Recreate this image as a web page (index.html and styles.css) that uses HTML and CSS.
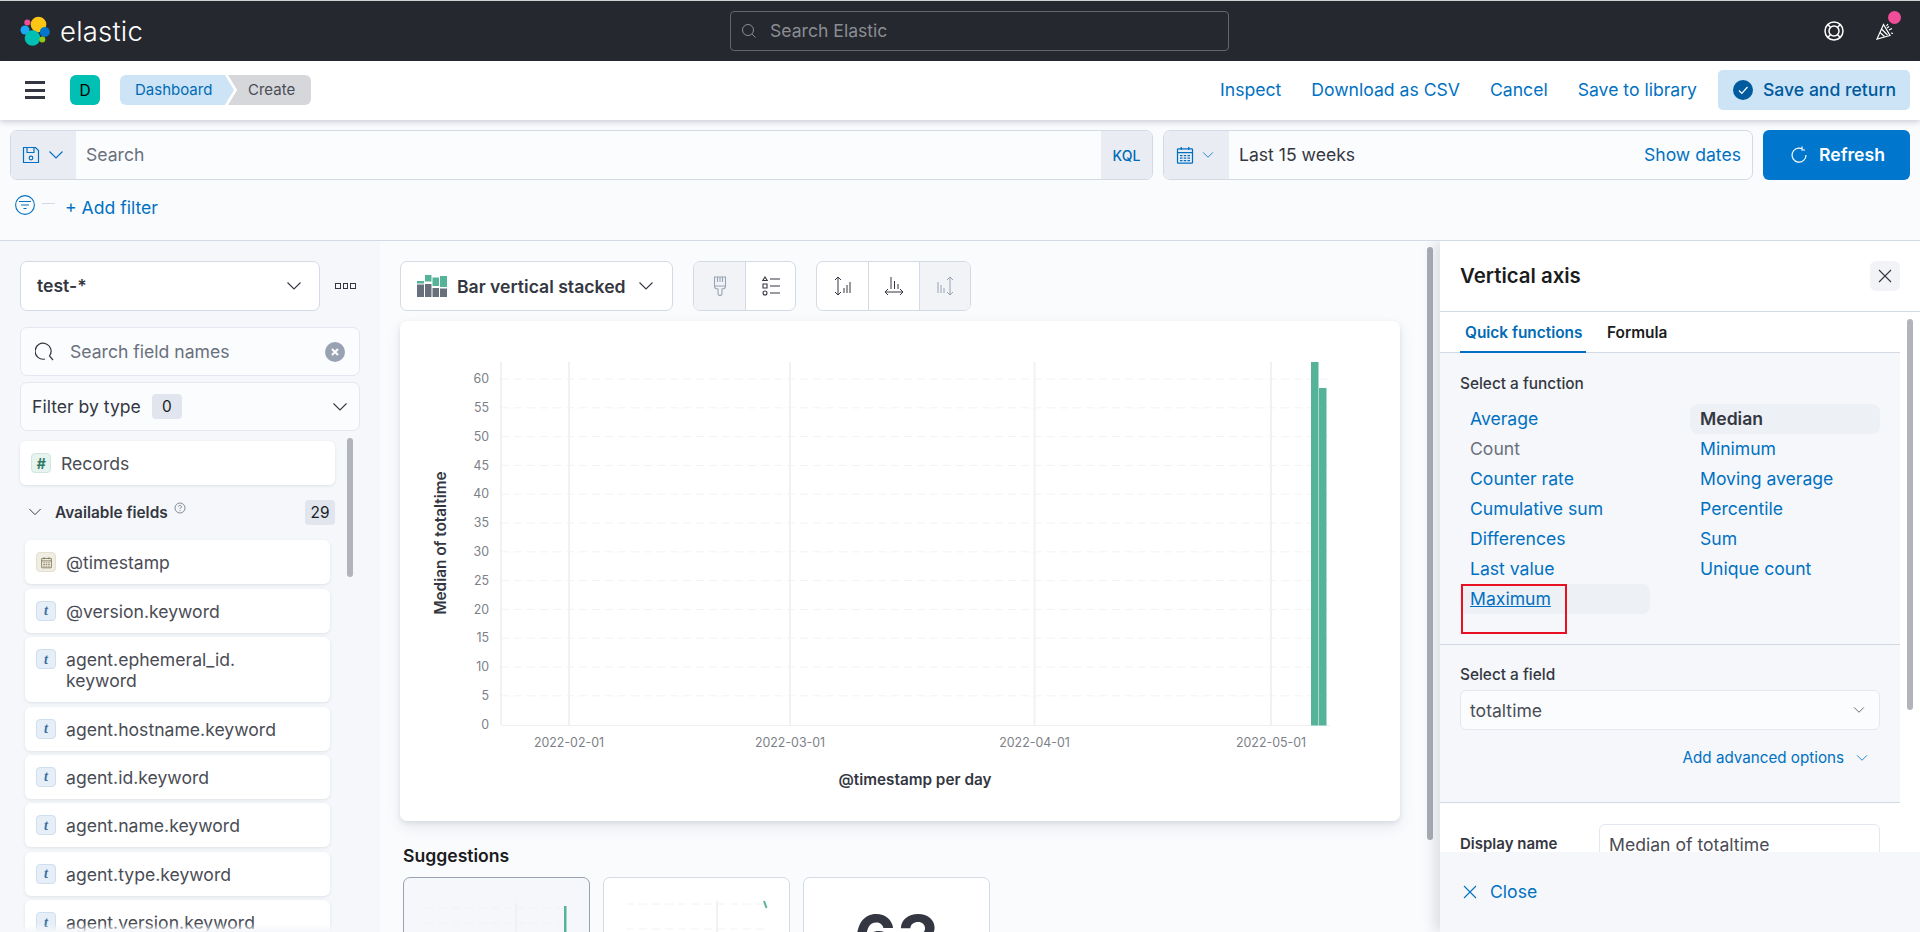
FILE: index.html
```html
<!DOCTYPE html>
<html lang="en">
<head>
<meta charset="utf-8">
<title>Elastic</title>
<link rel="stylesheet" href="styles.css">
</head>
<body>
<svg class="sprite" aria-hidden="true">
  <symbol id="chev" viewBox="0 0 16 16"><path d="M1.5 4.5 8 11l6.5-6.5" fill="none" stroke="currentColor" stroke-width="1.1"/></symbol>
  <symbol id="cross" viewBox="0 0 16 16"><path d="M2 2l12 12M14 2 2 14" fill="none" stroke="currentColor" stroke-width="1.1"/></symbol>
  <symbol id="cal" viewBox="0 0 16 16"><path d="M2.5 3h11a.5.5 0 0 1 .5.5v10.5a.5.5 0 0 1-.5.5h-11a.5.5 0 0 1-.5-.5V3.500a.5.5 0 0 1 .5-.5zM2 6h12M5 1.500V4M11 1.500V4" fill="none" stroke="currentColor"/><path d="M4 8h2v1H4zM7 8h2v1H7zM10 8h2v1h-2zM4 10h2v1H4zM7 10h2v1H7zM10 10h2v1h-2zM4 12h2v1H4zM7 12h2v1H7zM10 12h2v1h-2z" fill="currentColor"/></symbol>
</svg>
<div class="page">
  <header class="topbar">
    <div class="brand">
      <svg class="logo" viewBox="0 0 30 30">
        <circle cx="18.500" cy="8.500" r="7.800" fill="#fec514"/>
        <circle cx="7.300" cy="6.500" r="3" fill="#f04e98"/>
        <circle cx="5" cy="14" r="4.500" fill="#1ba9f5"/>
        <circle cx="12.500" cy="22" r="7.800" fill="#00bfb3"/>
        <circle cx="24.800" cy="16" r="5" fill="#0077cc"/>
        <circle cx="22.300" cy="23.500" r="3" fill="#93c90e"/>
      </svg>
      <span class="wordmark">elastic</span>
    </div>
    <div class="globalsearch">
      <svg class="ico16" viewBox="0 0 16 16"><circle cx="7" cy="7" r="5.500" fill="none" stroke="currentColor"/><path d="M11 11l3.500 3.500" stroke="currentColor"/></svg>
      <span>Search Elastic</span>
    </div>
    <div class="topicons">
      <svg class="ico20" viewBox="0 0 20 20" fill="none" stroke="#fff" stroke-width="1.500"><circle cx="10" cy="10" r="9"/><circle cx="10" cy="10" r="5"/><path d="M3.800 3.500 6.600 6.500M16.200 3.500l-2.800 3M3.800 16.500l2.800-3M16.200 16.500l-2.800-3"/></svg>
      <span class="popper">
        <svg class="ico20" viewBox="0 0 20 20" fill="none" stroke="#fff" stroke-width="1.200"><path d="M8.500 3.500 2 18l13-3.500z"/><path d="M6.500 8l6 6M5 11.500l4.500 4M11.500 5 13 3M14 9l3-1.500M12 7l2-1.500M16 12l2 .5"/></svg>
        <i class="dot"></i>
      </span>
    </div>
  </header>

  <nav class="subnav">
    <span class="burger"><i></i><i></i><i></i></span>
    <span class="avatar">D</span>
    <div class="crumbs">
      <span class="crumb crumb-blue">Dashboard</span>
      <span class="crumb crumb-grey">Create</span>
    </div>
    <div class="navlinks">
      <a>Inspect</a>
      <a>Download as CSV</a>
      <a>Cancel</a>
      <a>Save to library</a>
      <button class="savebtn">
        <svg class="ico20" viewBox="0 0 20 20"><circle cx="10" cy="10" r="10" fill="#005a9e"/><path d="M6 10.500l2.800 2.800L14.500 7" fill="none" stroke="#fff" stroke-width="1.200"/></svg>
        Save and return
      </button>
    </div>
  </nav>

  <section class="querybar">
    <div class="qsearch">
      <div class="prepend prepend-save">
        <svg class="ico18" viewBox="0 0 18 18" fill="none" stroke="currentColor" stroke-width="1.200"><path d="M1.500 1.500h12l3 3v12h-15z"/><path d="M5 1.500v5h7v-5"/><circle cx="9" cy="12" r="1.800"/></svg>
        <svg class="ico16" viewBox="0 0 16 16"><use href="#chev"/></svg>
      </div>
      <span class="qtext">Search</span>
      <span class="kql">KQL</span>
    </div>
    <div class="qdate">
      <div class="prepend prepend-cal">
        <svg class="ico20" viewBox="0 0 16 16"><use href="#cal"/></svg>
        <svg class="ico12" viewBox="0 0 16 16"><use href="#chev"/></svg>
      </div>
      <span class="qrange">Last 15 weeks</span>
      <a class="showdates">Show dates</a>
    </div>
    <button class="refresh">
      <svg class="ico18" viewBox="0 0 18 18" fill="none" stroke="#fff" stroke-width="1.200"><path d="M12 2.800A7 7 0 1 0 16 9"/><path d="M12 .5v3.500h3"/></svg>
      <span class="refreshlabel">Refresh</span>
    </button>
  </section>

  <section class="filterbar">
    <svg class="ico20" viewBox="0 0 20 20" fill="none" stroke="#0071c2" stroke-width="1.100"><circle cx="10" cy="10" r="9.400"/><path d="M4 6.500h12M6 10h8M8.500 13.500h3"/></svg>
    <i class="dash"></i>
    <a class="addfilter">+ Add filter</a>
  </section>

  <main class="workspace">
    <aside class="sidebar">
      <div class="indexrow">
        <div class="indexpick">
          <span>test-*</span>
          <svg class="ico16" viewBox="0 0 16 16"><use href="#chev"/></svg>
        </div>
        <span class="dots"><i></i><i></i><i></i></span>
      </div>
      <div class="fieldsearch">
        <svg class="ico20" viewBox="0 0 20 20" fill="none" stroke="#343741" stroke-width="1.200"><path d="M18 18l-3.500-4A8 8 0 1 0 10 17"/></svg>
        <span class="ph">Search field names</span>
        <span class="clear"><svg viewBox="0 0 10 10"><path d="M2 2l6 6M8 2 2 8" stroke="#fff" stroke-width="2"/></svg></span>
      </div>
      <div class="typefilter">
        <span class="typelabel">Filter by type</span>
        <span class="badge">0</span>
        <svg class="ico16 pushright" viewBox="0 0 16 16"><use href="#chev"/></svg>
      </div>
      <div class="fieldlist">
        <div class="field field-records"><span class="ftype ftype-num">#</span><span>Records</span></div>
        <div class="availrow">
          <svg class="ico16" viewBox="0 0 16 16"><use href="#chev"/></svg>
          <strong>Available fields</strong>
          <svg class="help" viewBox="0 0 12 12"><circle cx="6" cy="6" r="5" fill="none" stroke="#69707d" stroke-width=".8"/><path d="M4.600 4.800a1.400 1.400 0 1 1 2.200 1.100c-.5.400-.8.600-.8 1.200M6 8.200v1" fill="none" stroke="#69707d" stroke-width=".8"/></svg>
          <span class="badge badge-end">29</span>
        </div>
        <div class="field"><span class="ftype ftype-date"><svg viewBox="0 0 16 16"><use href="#cal"/></svg></span><span>@timestamp</span></div>
        <div class="field"><span class="ftype ftype-text">t</span><span>@version.keyword</span></div>
        <div class="field"><span class="ftype ftype-text">t</span><span>agent.ephemeral_id.<br>keyword</span></div>
        <div class="field"><span class="ftype ftype-text">t</span><span>agent.hostname.keyword</span></div>
        <div class="field"><span class="ftype ftype-text">t</span><span>agent.id.keyword</span></div>
        <div class="field"><span class="ftype ftype-text">t</span><span>agent.name.keyword</span></div>
        <div class="field"><span class="ftype ftype-text">t</span><span>agent.type.keyword</span></div>
        <div class="field"><span class="ftype ftype-text">t</span><span>agent.version.keyword</span></div>
      </div>
      <i class="sidescroll"></i>
      <i class="sidefade"></i>
    </aside>

    <section class="center">
      <div class="toolbar">
        <div class="chartpick">
          <svg class="barsicon" viewBox="0 0 30 22">
            <path fill="#54b399" d="M0 6h7v2.500H0zM8 0h6.500v6.500H8zM15.500 2.500H22V11h-6.500zM23 1h7v11h-7z"/>
            <path fill="#69707d" d="M0 9.500h7V22H0zM8 9h6.500v13H8zM15.500 13H22v9h-6.500zM23 13.500h7V22h-7z"/>
          </svg>
          <span>Bar vertical stacked</span>
          <svg class="ico16" viewBox="0 0 16 16"><use href="#chev"/></svg>
        </div>
        <div class="btngroup">
          <span class="gbtn gbtn-on">
            <svg class="ico20" viewBox="0 0 20 20" fill="none" stroke="#98a2b3" stroke-width="1.100"><path d="M4.500 1h11v9h-11zM4.500 10c0 2 1 3 3.500 3v4.500a2 2 0 0 0 4 0V13c2.500 0 3.500-1 3.500-3M7.500 1v5M10 1v5M12.500 1v5"/></svg>
          </span>
          <span class="gbtn">
            <svg class="ico20" viewBox="0 0 20 20" fill="none" stroke="#343741" stroke-width="1.100"><path d="M9 3h10M9 10h10M9 17h10"/><path d="M4 1l2.200 3.500H1.800z"/><path d="M2 8h4v4H2z"/><circle cx="4" cy="17" r="2"/></svg>
          </span>
        </div>
        <div class="btngroup btngroup-wide">
          <span class="gbtn">
            <svg class="ico20" viewBox="0 0 20 20" fill="none" stroke="#343741" stroke-width="1"><path d="M5 1v18M2 4l3-3 3 3M2 16l3 3 3-3M11 12v5M14 9v8M17 6v11"/></svg>
          </span>
          <span class="gbtn">
            <svg class="ico20" viewBox="0 0 20 20" fill="none" stroke="#343741" stroke-width="1"><path d="M1 16h18M4 13l-3 3 3 3M16 13l3 3-3 3M7 1v12M10.500 5v8M14 8v5"/></svg>
          </span>
          <span class="gbtn gbtn-on">
            <svg class="ico20" viewBox="0 0 20 20" fill="none" stroke="#98a2b3" stroke-width="1"><path d="M15 1v18M12 4l3-3 3 3M12 16l3 3 3-3M3 6v11M6 9v8M9 12v5"/></svg>
          </span>
        </div>
      </div>

      <div class="chartcard">
        <svg class="chart" viewBox="0 0 1000 500" width="1000" height="500">
          <g class="grid-h">
            <path d="M101 58H928M101 86.800H928M101 115.600H928M101 144.400H928M101 173.200H928M101 202H928M101 230.800H928M101 259.600H928M101 288.400H928M101 317.200H928M101 346H928M101 374.800H928"/>
          </g>
          <g class="grid-v">
            <path d="M101 41V404M169 41V404M390 41V404M634.500 41V404M871 41V404"/>
          </g>
          <path class="baseline" d="M101 404.500H930"/>
          <rect class="bar" x="911" y="41" width="7.500" height="363.500"/>
          <rect class="bar" x="919" y="67" width="7.500" height="337.500"/>
          <g class="ylabels">
            <text x="89" y="62">60</text><text x="89" y="91">55</text><text x="89" y="120">50</text>
            <text x="89" y="149">45</text><text x="89" y="177">40</text><text x="89" y="206">35</text>
            <text x="89" y="235">30</text><text x="89" y="264">25</text><text x="89" y="293">20</text>
            <text x="89" y="321">15</text><text x="89" y="350">10</text><text x="89" y="379">5</text>
            <text x="89" y="408">0</text>
          </g>
          <g class="xlabels">
            <text x="169" y="426">2022-02-01</text><text x="390" y="426">2022-03-01</text>
            <text x="634.500" y="426">2022-04-01</text><text x="871" y="426">2022-05-01</text>
          </g>
          <text class="axistitle" x="515" y="464">@timestamp per day</text>
          <text class="axistitle" transform="translate(46 222) rotate(-90)">Median of totaltime</text>
        </svg>
      </div>

      <h3 class="sugtitle">Suggestions</h3>
      <div class="sugrow">
        <div class="sugcard sugcard-on">
          <svg viewBox="0 0 186 60" width="186" height="60" class="mini">
            <path class="grid-h" d="M22 30H160M22 45H160"/>
            <path class="grid-v" d="M112 25V60"/>
            <rect class="bar" x="160" y="28" width="2.500" height="32"/>
          </svg>
        </div>
        <div class="sugcard">
          <svg viewBox="0 0 186 60" width="186" height="60" class="mini">
            <path class="grid-h" d="M22 26H160M22 51H160"/>
            <path class="grid-v" d="M113 23V60"/>
            <path d="M160 23l2.500 7" stroke="#54b399" stroke-width="2" fill="none"/>
          </svg>
        </div>
        <div class="sugcard sugcard-metric"><span>63</span></div>
      </div>
      <i class="mainscroll"></i>
    </section>

    <aside class="flyout">
      <div class="flyhead">
        <h2>Vertical axis</h2>
        <span class="flyclose"><svg class="ico16" viewBox="0 0 16 16"><use href="#cross"/></svg></span>
      </div>
      <div class="flybody">
        <div class="flyinner">
          <div class="tabs">
            <span class="tab tab-on">Quick functions</span>
            <span class="tab">Formula</span>
          </div>
          <div class="sect sect-fn">
            <div class="label">Select a function</div>
            <div class="fngrid">
              <a class="fn">Average</a>
              <a class="fn fn-off">Count</a>
              <a class="fn">Counter rate</a>
              <a class="fn">Cumulative sum</a>
              <a class="fn">Differences</a>
              <a class="fn">Last value</a>
              <a class="fn fn-hover"><u>Maximum</u></a>
              <a class="fn fn-sel">Median</a>
              <a class="fn">Minimum</a>
              <a class="fn">Moving average</a>
              <a class="fn">Percentile</a>
              <a class="fn">Sum</a>
              <a class="fn">Unique count</a>
            </div>
            <i class="redbox"></i>
          </div>
          <div class="sect sect-field">
            <div class="label">Select a field</div>
            <div class="select">
              <span>totaltime</span>
              <svg class="ico12" viewBox="0 0 16 16"><use href="#chev"/></svg>
            </div>
            <a class="advanced">Add advanced options
              <svg class="ico12" viewBox="0 0 16 16"><use href="#chev"/></svg>
            </a>
          </div>
          <div class="sect-name">
            <div class="label label-strong">Display name</div>
            <div class="nameinput">Median of totaltime</div>
          </div>
        </div>
        <i class="flyscroll"></i>
      </div>
      <div class="flyfoot">
        <svg class="ico16" viewBox="0 0 16 16"><use href="#cross"/></svg>
        <a>Close</a>
      </div>
    </aside>
  </main>
</div>
</body>
</html>
```
FILE: styles.css
```css
* { box-sizing: border-box; }
html, body { margin: 0; padding: 0; }
body { font-family: Inter, "Liberation Sans", sans-serif; font-size: 17.6px; color: #343741; background: #fafbfd; }
a { color: #0071c2; }
i { display: block; font-style: normal; }
.sprite { display: none; }
.page { width: 1920px; height: 932px; display: flex; flex-direction: column; overflow: hidden; }

.ico12 { width: 12px; height: 12px; flex: none; }
.ico16 { width: 16px; height: 16px; flex: none; }
.ico18 { width: 18px; height: 18px; flex: none; }
.ico20 { width: 20px; height: 20px; flex: none; }

/* top bar */
.topbar { height: 61px; flex: none; background: #25282f; border-top: 1px solid #d0d1d3; display: grid; grid-template-columns: 730px 499px 1fr; align-items: center; }
.brand { display: flex; align-items: center; padding-left: 20px; gap: 10px; }
.logo { width: 30px; height: 30px; }
.wordmark { color: #fff; font-size: 27.500px; font-weight: 300; letter-spacing: .2px; line-height: 30px; }
.globalsearch { height: 40px; border: 1px solid #63666c; border-radius: 4px; background: #25282f; display: flex; align-items: center; gap: 13px; padding: 0 0 1px 10px; color: #8b8d93; }
.topicons { display: flex; justify-content: flex-end; align-items: center; gap: 31px; padding-right: 25px; }
.popper { position: relative; display: block; height: 20px; }
.dot { position: absolute; top: -10px; left: 13px; width: 13px; height: 13px; border-radius: 50%; background: #f04e98; }

/* app menu */
.subnav { height: 59px; flex: none; background: #fff; box-shadow: 0 2px 6px rgba(60, 70, 100, .25); display: flex; align-items: center; padding: 0 10px 1px 25px; position: relative; z-index: 2; }
.burger { width: 20px; display: flex; flex-direction: column; gap: 4.500px; }
.burger i { height: 3px; background: #343741; }
.avatar { width: 30px; height: 30px; margin-left: 25px; border-radius: 6px; background: #00bfb3; color: #000; font-size: 15.400px; display: flex; align-items: center; justify-content: center; }
.crumbs { display: flex; margin-left: 20px; font-size: 15px; }
.crumb { height: 30px; display: flex; align-items: center; padding-bottom: 1px; }
.crumb-blue { width: 114px; padding-left: 15px; background: #cce4f5; color: #006bb4; border-radius: 6px 0 0 6px; clip-path: polygon(0 0, 92% 0, 100% 50%, 92% 100%, 0 100%); }
.crumb-grey { width: 83px; margin-left: -6px; padding-left: 20px; background: #d6d7da; color: #4a4c55; border-radius: 0 6px 6px 0; clip-path: polygon(0 0, 100% 0, 100% 100%, 0 100%, 11% 50%); }
.navlinks { margin-left: auto; display: flex; align-items: center; gap: 30px; }
.navlinks a { margin-bottom: 2px; }
.savebtn { width: 192px; height: 40px; margin-left: -9px; border: 0; border-radius: 5px; background: #cce4f5; color: #005a9e; display: flex; align-items: center; gap: 10px; padding: 0 0 1px 15px; font: 500 17.600px Inter, sans-serif; }

/* query bar */
.querybar { height: 60px; flex: none; padding: 10px 10px 0; display: flex; gap: 10px; }
.qsearch, .qdate { height: 50px; border: 1px solid #d3dae6; border-radius: 7px; background: #fbfcfd; display: flex; align-items: center; overflow: hidden; }
.qsearch { width: 1143px; }
.qdate { width: 590px; }
.prepend { height: 100%; background: #e9edf3; color: #0071c2; display: flex; align-items: center; flex: none; }
.prepend-save { width: 65px; gap: 8px; padding-left: 11px; }
.prepend-cal { width: 65px; gap: 7px; padding-left: 11px; }
.qtext { margin: 0 0 2px 10px; color: #69707d; flex: 1; }
.kql { width: 51px; height: 100%; background: #e9edf3; color: #006bb4; font-size: 14px; font-weight: 500; display: flex; align-items: center; justify-content: center; }
.qrange { margin: 0 0 1px 10px; color: #343741; }
.showdates { margin: 0 0 1px auto; padding-right: 11px; }
.refresh { width: 147px; height: 50px; border: 0; border-radius: 6px; background: #0077cc; color: #fff; display: flex; align-items: center; gap: 11px; padding: 0 0 0 27px; font: 600 17.600px Inter, sans-serif; }
.refreshlabel { margin-bottom: 1px; }

/* filter row */
.filterbar { height: 61px; flex: none; display: flex; align-items: center; padding: 0 0 10px 15px; border-bottom: 1px solid #d3dae6; }
.dash { width: 13px; height: 1px; background: #d3dae6; margin: 0 11px 3px 7px; }
.addfilter { margin-top: 5px; margin-left: -1px; }

/* workspace */
.workspace { flex: 1; min-height: 0; display: flex; overflow: hidden; }

/* sidebar */
.sidebar { width: 380px; flex: none; background: #f5f7fa; padding: 20px 20px 0; position: relative; overflow: hidden; }
.indexrow { display: flex; align-items: center; gap: 15px; }
.indexpick { width: 300px; height: 50px; border: 1px solid #d3dae6; border-radius: 7px; background: #fff; display: flex; align-items: center; justify-content: space-between; padding: 0 17px 1px 16px; font-weight: 600; }
.dots { display: flex; gap: 2px; }
.dots i { width: 5.500px; height: 5.500px; border: 1px solid #343741; }
.fieldsearch, .typefilter { width: 340px; height: 49px; border: 1px solid #e3e8f0; border-radius: 7px; background: #fbfcfd; display: flex; align-items: center; }
.fieldsearch { margin-top: 16px; padding: 0 14px; }
.ph { margin-left: 15px; color: #69707d; flex: 1; }
.clear { width: 20px; height: 20px; border-radius: 50%; background: #98a2b3; display: flex; align-items: center; justify-content: center; }
.clear svg { width: 10px; height: 10px; }
.typefilter { margin-top: 6px; padding: 0 11px; }
.typelabel { margin-bottom: 1px; }
.badge { height: 25px; min-width: 30px; padding: 0 4px; margin-left: 11px; border-radius: 4px; background: #e0e5ee; color: #1a1c21; font-size: 15.400px; display: flex; align-items: center; justify-content: center; }
.pushright { margin-left: auto; }
.fieldlist { width: 315px; margin-top: 10px; }
.field { display: flex; align-items: flex-start; gap: 10px; width: 305px; margin: 0 0 4.400px 5px; padding: 12px 11px 11px; background: #fff; border-radius: 6px; box-shadow: 0 1px 3px rgba(60, 70, 100, .12); line-height: 21px; color: #4a4c55; min-height: 44px; }
.field-records { width: 315px; margin-left: 0; }
.ftype { width: 20px; height: 20px; flex: none; border-radius: 4px; display: flex; align-items: center; justify-content: center; font-size: 14px; font-weight: 700; font-style: italic; font-family: "Liberation Serif", serif; }
.ftype-num { background: #e6f3ef; border: 1px solid #cfe6de; color: #2f7a62; font-family: Inter, sans-serif; }
.ftype-text { background: #e6eff8; border: 1px solid #cfdfef; color: #3f6f9e; }
.ftype-date { background: #f0eee4; border: 1px solid #e4e0d0; color: #7a6e4a; }
.ftype-date svg { width: 13px; height: 13px; }
.availrow { height: 53px; margin-top: -2px; padding: 0 0 3px 8px; display: flex; align-items: center; color: #343741; font-size: 15.400px; }
.availrow strong { margin-left: 13px; font-weight: 600; }
.availrow .ico16 { width: 14px; height: 14px; }
.help { width: 12px; height: 12px; margin: -8px 0 0 6px; }
.badge-end { margin-left: auto; }
.sidescroll { position: absolute; left: 347px; top: 197px; width: 6px; height: 139px; border-radius: 3px; background: #b1b4bb; }
.sidefade { position: absolute; left: 0; bottom: 0; width: 100%; height: 8px; background: linear-gradient(rgba(245, 247, 250, 0), #f5f7fa); }

/* center */
.center { width: 1060px; flex: none; padding: 20px 0 0 20px; position: relative; overflow: hidden; }
.toolbar { display: flex; gap: 20px; height: 50px; }
.chartpick { width: 273px; height: 50px; border: 1px solid #d3dae6; border-radius: 7px; background: #fff; display: flex; align-items: center; padding: 0 18px 0 16px; font-weight: 600; }
.barsicon { width: 30px; height: 22px; margin-right: 10px; flex: none; }
.chartpick .ico16 { margin-left: auto; }
.btngroup { display: flex; height: 50px; border: 1px solid #d3dae6; border-radius: 7px; overflow: hidden; background: #fff; }
.gbtn { width: 50px; display: flex; align-items: center; justify-content: center; border-left: 1px solid #d3dae6; }
.gbtn:first-child { border-left: 0; width: 51px; }
.btngroup-wide .gbtn { width: 51px; }
.btngroup-wide .gbtn:first-child { width: 51px; }
.gbtn-on { background: #f1f3f6; }
.chartcard { width: 1000px; height: 500px; margin-top: 10px; background: #fff; border-radius: 7px; box-shadow: 0 2px 4px rgba(60, 70, 100, .1), 0 6px 14px rgba(60, 70, 100, .1); }
.chart { display: block; }
.grid-h, .grid-h path { stroke: #f1f2f5; stroke-width: 1; stroke-dasharray: 8 5; fill: none; }
.grid-v, .grid-v path { stroke: #eff1f5; stroke-width: 2; fill: none; }
.baseline { stroke: #eef0f4; stroke-width: 1; fill: none; }
.bar { fill: #54b399; }
.ylabels text { font: 12.400px Inter, sans-serif; fill: #7d7f87; text-anchor: end; }
.xlabels text { font: 12.400px Inter, sans-serif; fill: #7d7f87; text-anchor: middle; }
.axistitle { font: 600 15.300px Inter, sans-serif; fill: #343741; text-anchor: middle; }
.sugtitle { margin: 25px 0 0 3px; font-size: 17.600px; line-height: 20px; font-weight: 600; color: #1a1c21; }
.sugrow { display: flex; gap: 13px; margin: 11px 0 0 3px; }
.sugcard { width: 187px; height: 90px; border: 1px solid #d3dae6; border-radius: 7px 7px 0 0; background: #fff; overflow: hidden; }
.sugcard-on { background: #f5f7fa; border-color: #98a2b3; }
.mini { display: block; }
.sugcard-metric { display: flex; justify-content: center; font-size: 66px; font-weight: 700; color: #343741; line-height: 122px; }
.mainscroll { position: absolute; left: 1047px; top: 6px; width: 6px; height: 593px; border-radius: 3px; background: #a9acb5; }

/* flyout */
.flyout { width: 480px; flex: none; background: #fff; display: flex; flex-direction: column; box-shadow: -6px 0 12px rgba(60, 60, 70, .14); position: relative; z-index: 1; }
.flyhead { height: 71px; flex: none; border-bottom: 1px solid #d3dae6; display: flex; align-items: center; justify-content: space-between; padding: 0 20px; }
.flyhead h2 { margin: 0 0 2px; font-size: 20.400px; font-weight: 600; color: #1a1c21; }
.flyclose { width: 30px; height: 30px; border-radius: 6px; background: #f1f3f6; display: flex; align-items: center; justify-content: center; }
.flybody { flex: 1; min-height: 0; position: relative; overflow: hidden; }
.flyinner { width: 460px; }
.tabs { height: 41px; display: flex; gap: 10px; padding-left: 20px; border-bottom: 1px solid #d3dae6; }
.tab { height: 41px; padding: 0 5px; display: flex; align-items: center; font-size: 15.400px; font-weight: 600; color: #1a1c21; white-space: nowrap; }
.tab-on { width: 126px; color: #006bb4; border-bottom: 2px solid #0071c2; padding-top: 2px; }
.tab:nth-child(2) { margin-left: 6px; }
.sect { background: #f5f7fa; border-bottom: 1px solid #d3dae6; padding: 0 20px; position: relative; }
.label { height: 20px; line-height: 20px; font-size: 15.400px; font-weight: 500; color: #343741; }
.sect-fn { height: 292px; padding-top: 21px; }
.fngrid { margin-top: 10px; display: grid; grid-auto-flow: column; grid-template-rows: repeat(7, 30px); grid-template-columns: 190px 190px; column-gap: 40px; }
.fn { display: flex; align-items: center; padding: 0 0 2px 10px; border-radius: 8px; }
.fn-off { color: #69707d; }
.fn-sel { background: #edf0f4; color: #343741; font-weight: 600; }
.fn-hover { background: #edf0f4; }
.redbox { position: absolute; left: 21px; top: 231px; width: 106px; height: 50px; border: 2px solid #e81123; }
.sect-field { height: 158px; padding-top: 20px; }
.select { height: 40px; margin-top: 5px; border: 1px solid #e3e8f0; border-radius: 6px; background: #fbfcfd; display: flex; align-items: center; justify-content: space-between; padding: 0 14px 0 9px; color: #4a4c55; }
.advanced { display: flex; justify-content: flex-end; align-items: center; gap: 12px; margin-top: 18px; padding-right: 12px; font-size: 15.200px; line-height: 20px; }
.sect-name { display: flex; padding: 21px 20px 0; }
.label-strong { width: 139px; font-weight: 600; margin-top: 10px; font-size: 15px; white-space: nowrap; }
.nameinput { width: 281px; height: 40px; border: 1px solid #e3e8f0; border-radius: 6px; padding: 0 9px; display: flex; align-items: center; color: #4a4c55; }
.flyscroll { position: absolute; left: 467px; top: 7px; width: 6px; height: 391px; border-radius: 3px; background: #b1b4bb; }
.flyfoot { height: 80px; flex: none; background: #f5f7fa; display: flex; align-items: center; gap: 12px; padding: 0 0 1px 22px; color: #0071c2; position: relative; }
```
